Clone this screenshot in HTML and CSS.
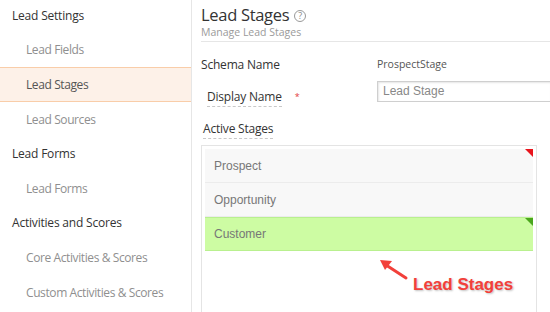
FILE: index.html
```html
<!DOCTYPE html>
<html>
<head>
<meta charset="utf-8">
<link rel="stylesheet" href="styles.css">
</head>
<body>
<div class="page">
  <aside class="sidebar">
    <ul class="nav">
      <li class="nav-head">Lead Settings</li>
      <li class="nav-item">Lead Fields</li>
      <li class="nav-item active">Lead Stages</li>
      <li class="nav-item">Lead Sources</li>
      <li class="nav-head">Lead Forms</li>
      <li class="nav-item">Lead Forms</li>
      <li class="nav-head">Activities and Scores</li>
      <li class="nav-item">Core Activities &amp; Scores</li>
      <li class="nav-item">Custom Activities &amp; Scores</li>
    </ul>
  </aside>
  <main class="main">
    <header class="head">
      <h1 class="title">Lead Stages <span class="help">?</span></h1>
      <div class="subtitle">Manage Lead Stages</div>
    </header>
    <div class="row row-schema">
      <div class="label">Schema Name</div>
      <div class="value">ProspectStage</div>
    </div>
    <div class="row row-display">
      <div class="label label-display"><span class="dashed">Display Name</span><span class="req">*</span></div>
      <div class="input">Lead Stage</div>
    </div>
    <div class="active-label"><span class="dashed">Active Stages</span></div>
    <div class="panel">
      <div class="stage">Prospect<span class="corner corner-red"></span></div>
      <div class="stage">Opportunity</div>
      <div class="stage stage-green">Customer<span class="corner corner-green"></span></div>
    </div>
  </main>
  <div class="callout">
    <svg class="arrow" width="32" height="24" viewBox="0 0 32 24">
      <line x1="28" y1="20" x2="8" y2="7" stroke="#f2403a" stroke-width="3" stroke-linecap="round"/>
      <polygon points="2,2 14,3 7,12" fill="#f2403a"/>
    </svg>
    <span class="callout-text">Lead Stages</span>
  </div>
</div>
</body>
</html>
```

FILE: styles.css
```css
* { box-sizing: border-box; }
html, body { margin: 0; padding: 0; background: #fff; overflow: hidden; }
body { width: 550px; height: 312px; font-family: "Open Sans", "Noto Sans", sans-serif; }
.page { display: flex; height: 312px; position: relative; overflow: hidden; }

.sidebar { width: 192px; flex: none; border-right: 1px solid #e6e6e6; }
.nav { list-style: none; margin: -2px 0 0 0; padding: 0; }
.nav li { height: 34.6px; display: flex; align-items: center; font-size: 12px; letter-spacing: -0.2px; }
.nav-head { padding-left: 12px; color: #333; }
.nav-item { padding-left: 26px; color: #8f8f8f; letter-spacing: -0.4px !important; }
.nav-item.active { background: #fdf1e8; border-top: 1px solid #f9cda9; border-bottom: 1px solid #f9cda9; color: #555; }

.main { flex: 1; padding: 5px 0 0 9px; min-width: 0; }
.head { border-bottom: 1px solid #e6e6e6; padding-bottom: 2px; }
.title { margin: 0; font-weight: normal; font-size: 16.5px; line-height: 20px; color: #333; letter-spacing: -0.3px; display: flex; align-items: center; }
.help { display: inline-flex; width: 12px; height: 12px; border: 1px solid #999; border-radius: 50%; font-size: 9px; line-height: 10px; color: #888; align-items: center; justify-content: center; margin-left: 5px; margin-top: 2px; letter-spacing: 0; }
.subtitle { font-size: 10.5px; line-height: 14px; color: #9a9a9a; }

.row { display: flex; }
.label { width: 176px; flex: none; font-size: 12px; color: #333; letter-spacing: -0.2px; }
.row-schema { margin-top: 12px; height: 20px; align-items: center; }
.value { font-size: 10.5px; color: #555; }
.row-display { margin-top: 7px; }
.label-display { padding-left: 6px; padding-top: 8px; line-height: 16px; }
.dashed { border-bottom: 1px dashed #c8c8c8; padding-bottom: 1px; }
.req { color: #e23c3c; font-size: 9px; margin-left: 13px; vertical-align: top; }
.input { flex: 1; height: 21px; border: 1px solid #cfcfcf; border-right: none; box-shadow: inset 1px 1px 2px rgba(0,0,0,0.1); font-family: "Liberation Sans", Arial, sans-serif; font-size: 12px; color: #888; padding-left: 5px; line-height: 19px; }

.active-label { margin-top: 16px; padding-left: 2px; font-size: 12px; color: #333; line-height: 15px; letter-spacing: -0.2px; }

.panel { margin-top: 9px; width: 336px; height: 180px; border: 1px solid #e4e4e4; padding: 3px; }
.stage { position: relative; height: 34px; background: #f8f8f8; border-bottom: 1px solid #ececec; font-family: "Liberation Sans", Arial, sans-serif; font-size: 12px; color: #777; display: flex; align-items: center; padding-left: 9px; }
.stage-green { background: #cdfca3; border-top: 1px solid #b9f08f; border-bottom: 1px solid #b9f08f; }
.corner { position: absolute; top: 0; right: 0; width: 0; height: 0; border-left: 8px solid transparent; border-top: 8px solid; }
.corner-red { border-top-color: #e8141c; }
.corner-green { border-top-color: #4aa61c; }

.callout { position: absolute; left: 378px; top: 258px; }
.arrow { position: absolute; left: 0; top: 0; }
.callout-text { position: absolute; left: 35px; top: 17px; white-space: nowrap; font-family: "Liberation Sans", Arial, sans-serif; font-weight: bold; font-size: 17px; color: #f2403a; text-shadow: 1px 1px 2px rgba(0,0,0,0.25); }
```
